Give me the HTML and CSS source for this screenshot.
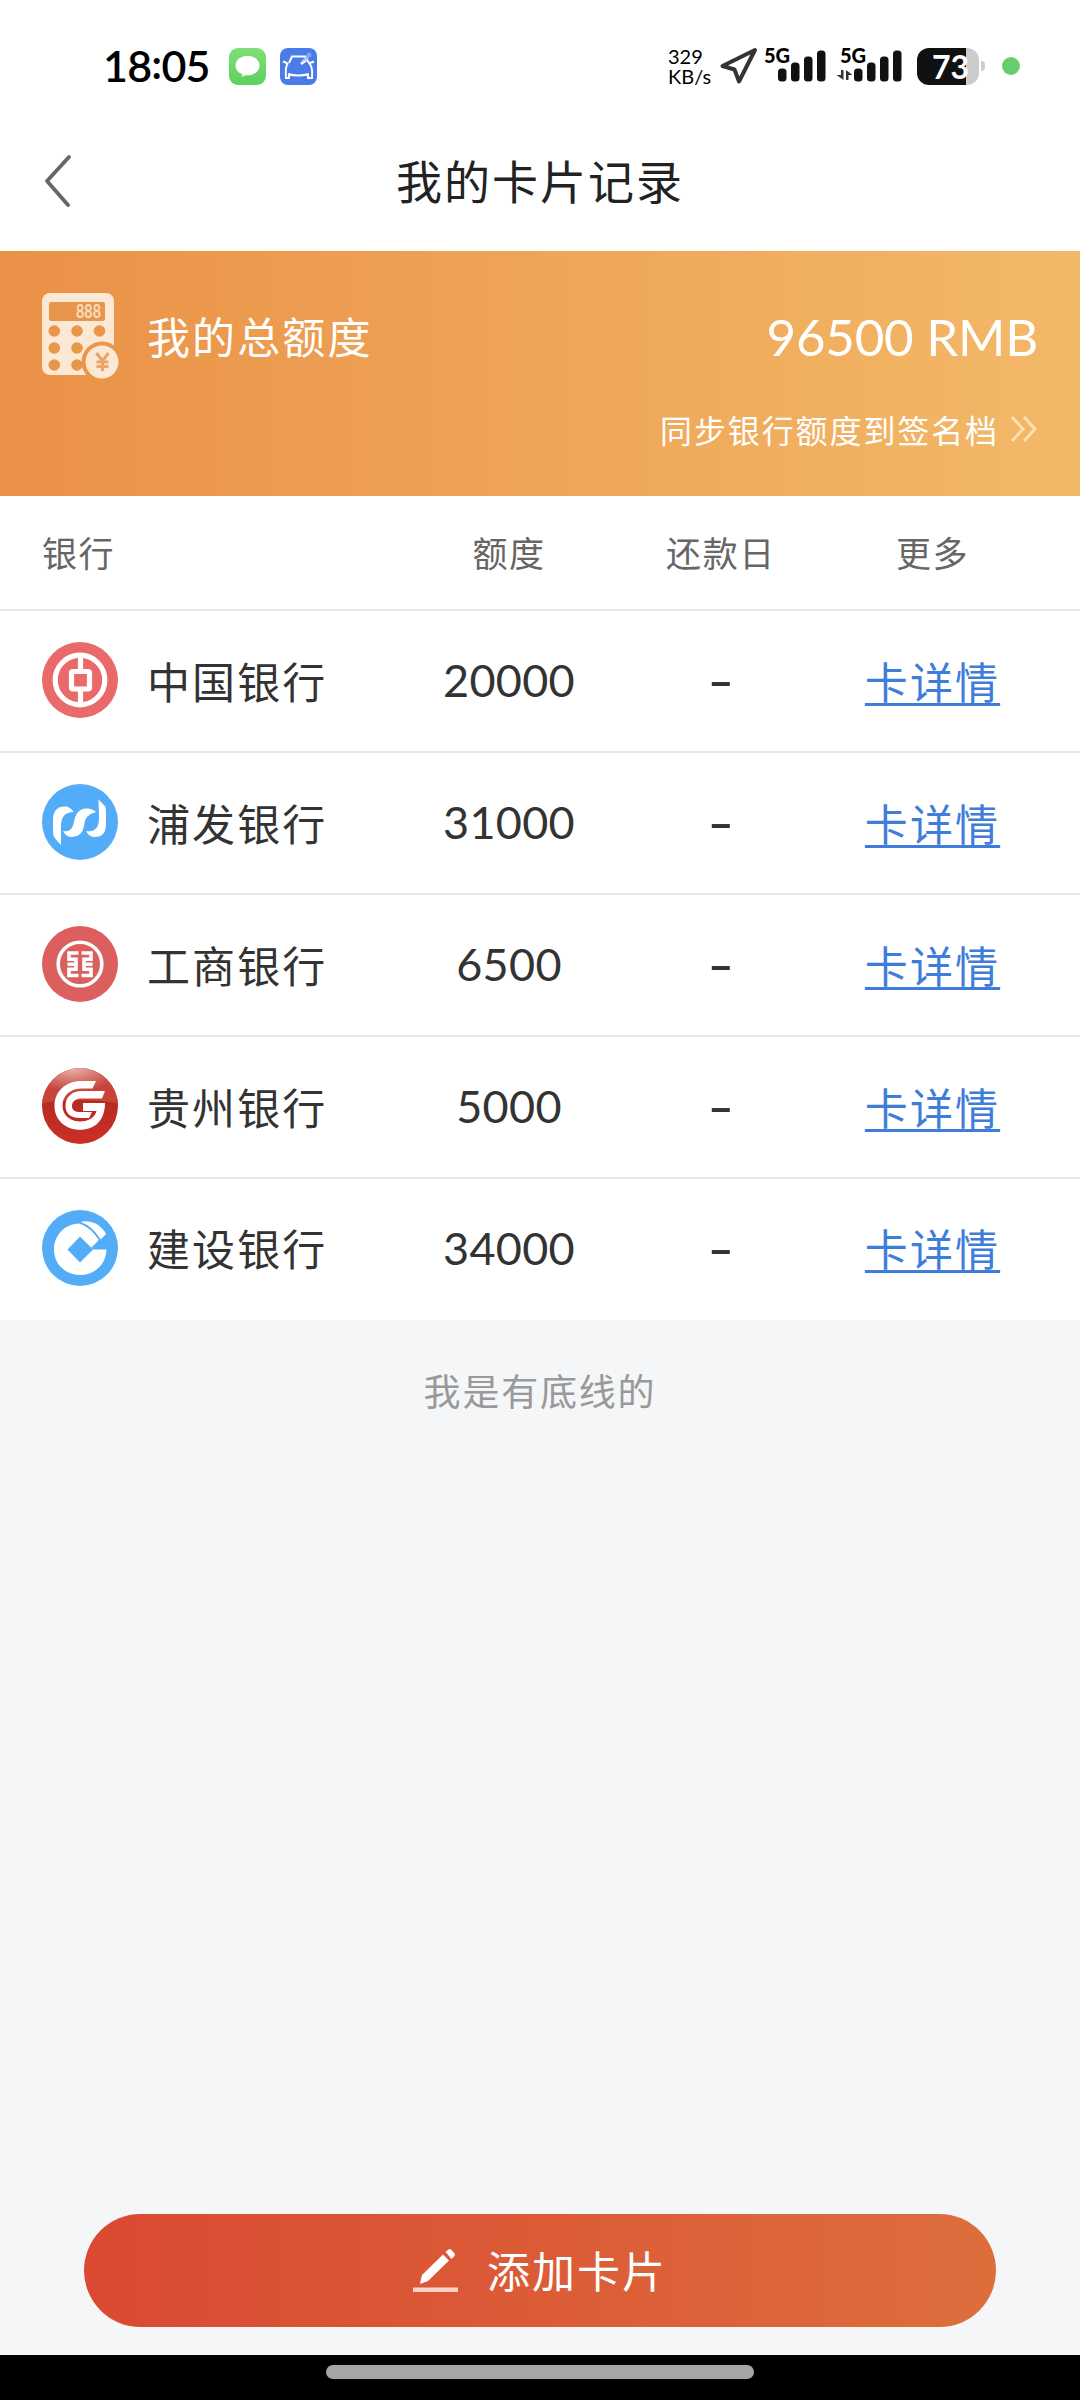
FILE: index.html
```html
<!DOCTYPE html>
<html lang="zh-CN">
<head>
  <meta charset="UTF-8">
  <meta name="viewport" content="width=device-width, initial-scale=1.0">
  <title>我的卡片记录</title>
  <link rel="stylesheet" href="styles.css">
</head>
<body>

<div class="page">
  <!-- Status bar -->
  <div class="status-bar">
    <span class="clock">18<span class="colon">:</span>05</span>
    <svg class="app-icon" viewBox="0 0 37 37">
      <defs>
        <linearGradient id="msg" x1="0" y1="0" x2="0" y2="1"><stop offset="0" stop-color="#7fdf78"/><stop offset="1" stop-color="#5fd05c"/></linearGradient>
      </defs>
      <rect width="37" height="37" rx="9" fill="url(#msg)"/>
      <ellipse cx="18.500" cy="17.500" rx="12" ry="9.800" fill="#fff"/>
      <path d="M14 25q0 3-3 4q4 0 7-3z" fill="#fff"/>
    </svg>
    <svg class="app-icon car" viewBox="0 0 37 37">
      <rect width="37" height="37" rx="8" fill="#4a7be6"/>
      <path d="M9 15L12 8.500H25L29 15M8 15Q5 18 6 30H9V26M29 15Q33 18 32 30H28V26M8 26Q18 29 29 26M3 13.500L7 15M34 13.500L30 15" fill="none" stroke="#fff" stroke-width="2"/>
      <path d="M21 16L29 7" stroke="#a9c3fa" stroke-width="3"/>
      <circle cx="29" cy="7" r="2.500" fill="#7fa5f5"/>
      <path d="M21 16l5-3" stroke="#fff" stroke-width="2"/>
    </svg>
    <div class="status-right">
      <div class="speed"><div>329</div><div>KB/s</div></div>
      <svg class="locate" viewBox="0 0 38 38"><path d="M35 3L2.500 19L14.500 22.500L19 34.500Z" fill="none" stroke="#333" stroke-width="4" stroke-linejoin="round"/></svg>
      <div class="signal">
        <span class="net">5G</span>
        <svg viewBox="0 0 64 38"><g fill="#111"><rect x="14" y="21.500" width="8.500" height="13" rx="3.500"/><rect x="27" y="15.500" width="8.500" height="19" rx="3.500"/><rect x="40" y="9.500" width="8.500" height="25" rx="3.500"/><rect x="53" y="3.500" width="8.500" height="31" rx="3.500"/></g></svg>
      </div>
      <div class="signal second">
        <span class="net">5G</span>
        <svg viewBox="0 0 64 38"><g fill="#111"><rect x="14" y="21.500" width="8.500" height="13" rx="3.500"/><rect x="27" y="15.500" width="8.500" height="19" rx="3.500"/><rect x="40" y="9.500" width="8.500" height="25" rx="3.500"/><rect x="53" y="3.500" width="8.500" height="31" rx="3.500"/></g><path d="M1 23H3.500V33L-3.500 28H1ZM6 33V23L12.500 28H8.500V33Z" fill="#333"/></svg>
      </div>
      <div class="battery"><span>73</span></div>
      <i class="dot"></i>
    </div>
  </div>

  <!-- Title bar -->
  <div class="nav-bar">
    <svg class="back" viewBox="0 0 30 54"><path d="M26 3L4 27L25 51" fill="none" stroke="#666" stroke-width="3.800" stroke-linecap="round" stroke-linejoin="round"/></svg>
    <h1>我的卡片记录</h1>
  </div>

  <!-- Total limit -->
  <div class="total">
    <div class="total-row">
      <svg class="calc" viewBox="0 0 77 86">
        <rect width="72" height="82" rx="8" fill="#fbe8d5"/>
        <rect x="7" y="9" width="56" height="19" rx="2" fill="#e9964b"/>
        <text x="34" y="25" class="calc-digits" textLength="25" lengthAdjust="spacingAndGlyphs">888</text>
        <g fill="#e9964b">
          <circle cx="12.300" cy="38" r="5.800"/><circle cx="35" cy="38" r="5.800"/><circle cx="57.500" cy="38" r="5.800"/>
          <circle cx="12.300" cy="55" r="5.800"/><circle cx="35" cy="55" r="5.800"/>
          <circle cx="12.300" cy="72" r="5.800"/><circle cx="35" cy="72" r="5.800"/>
          <circle cx="60" cy="69" r="20.500"/>
        </g>
        <circle cx="60" cy="69" r="16.500" fill="#fbe8d5"/>
        <path d="M54.500 60L60.500 68L66.500 60M60.500 68V78M54.500 69H66.500M54.500 73.500H66.500" fill="none" stroke="#e9a468" stroke-width="3"/>
      </svg>
      <span class="total-label">我的总额度</span>
      <span class="total-value">96500 RMB</span>
    </div>
    <div class="sync">
      <span>同步银行额度到签名档</span>
      <svg viewBox="0 0 28 28"><path d="M2 2L13 14L2 26M14 2L25 14L14 26" fill="none" stroke="#fde0b0" stroke-width="3"/></svg>
    </div>
  </div>

  <!-- Card list -->
  <div class="list">
    <div class="row head">
      <span>银行</span><span>额度</span><span>还款日</span><span>更多</span>
    </div>
    <div class="row">
      <div class="bank">
        <svg viewBox="0 0 76 76">
          <circle cx="38" cy="38" r="38" fill="#ea6a69"/>
          <g fill="none" stroke="#fff" stroke-width="5.200">
            <circle cx="38" cy="38" r="24.800"/>
            <path d="M38.500 13V28M38.500 49V63"/>
            <rect x="29.500" y="29.500" width="18" height="17.500" rx="1.500"/>
          </g>
        </svg>
        <span>中国银行</span>
      </div>
      <span class="amount">20000</span><span class="day">-</span><a class="more" href="#">卡详情</a>
    </div>
    <div class="row">
      <div class="bank">
        <svg viewBox="0 0 76 76">
          <circle cx="38" cy="38" r="38" fill="#52acf8"/>
          <g fill="#fff">
            <path d="M19 61L13.500 55Q11 52 11 48V36Q11 23 22 22.500Q28 22 31.500 28Q19 28 19 42Z"/>
            <path d="M21 47Q30 49 32 38Q34 25 44 24.500Q50 24 54 28Q43 30 42 42Q40 53 30 53Q24 53 21 47Z"/>
            <path d="M56.500 15.500L63 22Q64 24 64 30V40Q64 53 53 53Q47 53 44 47Q57 49 57 34Z"/>
          </g>
        </svg>
        <span>浦发银行</span>
      </div>
      <span class="amount">31000</span><span class="day">-</span><a class="more" href="#">卡详情</a>
    </div>
    <div class="row">
      <div class="bank">
        <svg viewBox="0 0 76 76">
          <circle cx="38" cy="38" r="38" fill="#dc5f5f"/>
          <g fill="none" stroke="#fff" stroke-width="3.600">
            <circle cx="38" cy="38" r="21.800"/>
            <path d="M36.500 27H27V33.200H34V43.200H27V49.500H36.500M25.500 38.200H34"/>
            <path d="M39.500 27H49V33.200H42V43.200H49V49.500H39.500M50.500 38.200H42"/>
          </g>
        </svg>
        <span>工商银行</span>
      </div>
      <span class="amount">6500</span><span class="day">-</span><a class="more" href="#">卡详情</a>
    </div>
    <div class="row">
      <div class="bank">
        <svg viewBox="0 0 76 76">
          <defs>
            <radialGradient id="gloss" cx="0.400" cy="0" r="0.650"><stop offset="0" stop-color="#e7b3ad"/><stop offset="1" stop-color="#c8443a"/></radialGradient>
            <linearGradient id="base" x1="0" y1="0" x2="0" y2="1"><stop offset="0.400" stop-color="#b52a20"/><stop offset="1" stop-color="#cc3026"/></linearGradient>
            <clipPath id="ball"><circle cx="38" cy="38" r="38"/></clipPath>
          </defs>
          <circle cx="38" cy="38" r="38" fill="url(#base)"/>
          <path d="M0 0H76V35Q38 29 0 35Z" fill="url(#gloss)" clip-path="url(#ball)"/>
          <path d="M54 13L50.500 20.500H40C28 20.500 20 28 20.500 38.500C21 48 29 53.500 38 53.500C47 53.500 53 49 54.500 43H41V35H63C63 52 53 61.800 38 61.800C23 61.800 12.500 51.500 12.500 38C12.500 24 23 13.500 38 13Z" fill="#fff"/>
          <path d="M63 23L60 30.500H40C34 30.500 30 33 30 38C30 42 33 44 38 44H50L47 50H38C29 50 23.500 46 23.500 38C23.500 29 30 23 40 23Z" fill="#fff"/>
        </svg>
        <span>贵州银行</span>
      </div>
      <span class="amount">5000</span><span class="day">-</span><a class="more" href="#">卡详情</a>
    </div>
    <div class="row">
      <div class="bank">
        <svg viewBox="0 0 76 76">
          <circle cx="38" cy="38" r="38" fill="#52acf8"/>
          <path d="M37 13.500C46 16 52 23 57 30L50 39.500H64.500C64 54 53 65 38.500 65C23 65 12 54 12 39.500C12 25 23 14 37 13.500Z" fill="#fff"/>
          <path d="M38 12C48 9 60 15 64 24L58.500 29.500Q50 16 38 12Z" fill="#fff"/>
          <path d="M38 26.500L51 39.500L38 52.500L25.500 39.500Z" fill="#52acf8"/>
          <path d="M38 12.500Q50 17 58 30L49 39" fill="none" stroke="#52acf8" stroke-width="1.500"/>
        </svg>
        <span>建设银行</span>
      </div>
      <span class="amount">34000</span><span class="day">-</span><a class="more" href="#">卡详情</a>
    </div>
  </div>
  <p class="end-line">我是有底线的</p>

  <!-- Add button -->
  <div class="add-wrap">
    <button class="add">
      <svg viewBox="0 0 46 46">
        <path d="M7 36L9 27L30 6.500L36 12.500L15 33Z" fill="#fff"/>
        <path d="M32.500 4L35.500 1.500Q37 0.500 38.500 2L41.500 5.500Q42.500 7 41 8.500L38.500 11Z" fill="#fff"/>
        <rect y="39.500" width="45" height="4.500" fill="#fcd3c8"/>
      </svg>
      <span>添加卡片</span>
    </button>
  </div>
  <div class="home-bar"><i></i></div>
</div>

</body>
</html>
```
FILE: styles.css
```css
* {
  box-sizing: border-box;
}
body {
  margin: 0;
  background-color: #f4f6f8;
  color: #333;
  font-family: Lato, "Noto Sans CJK SC", sans-serif;
}
.page {
  width: 1080px;
  height: 2400px;
  display: flex;
  flex-direction: column;
}
svg {
  display: block;
  flex-shrink: 0;
  overflow: visible;
}

/* status bar */
.status-bar {
  height: 116px;
  padding: 16px 60px 0 103px;
  display: flex;
  align-items: center;
  background-color: #fff;
  color: #000;
}
.clock {
  width: 126px;
  font-size: 43px;
  line-height: 50px;
  font-weight: 600;
  letter-spacing: -0.8px;
}
.colon {
  position: relative;
  top: -3px;
}
.app-icon {
  width: 37px;
  height: 37px;
}
.car {
  margin-left: 14px;
}
.status-right {
  margin-left: auto;
  display: flex;
  align-items: center;
}
.speed {
  width: 52px;
  font-size: 20px;
  line-height: 20px;
}
.speed div {
  height: 20px;
}
.locate {
  width: 38px;
  height: 38px;
}
.signal {
  position: relative;
  width: 64px;
  margin-left: 6px;
}
.signal svg {
  width: 64px;
  height: 38px;
}
.second {
  margin-left: 12px;
}
.net {
  position: absolute;
  left: 0;
  top: -2px;
  font-size: 20px;
  line-height: 20px;
  font-weight: 900;
}
.battery {
  position: relative;
  width: 62px;
  height: 37px;
  margin-left: 13px;
  border-radius: 12px;
  background: linear-gradient(to right, #111 49px, #ccc 49px);
  color: #fff;
  font-size: 32px;
  line-height: 37px;
  font-weight: bold;
  text-align: right;
  padding-right: 10px;
}
.battery::after {
  content: "";
  position: absolute;
  right: -6px;
  top: 13px;
  width: 4px;
  height: 10px;
  border-radius: 0 4px 4px 0;
  background-color: #ccc;
}
.dot {
  width: 18px;
  height: 18px;
  margin-left: 23px;
  border-radius: 50%;
  background-color: #68ce6d;
}

/* title bar */
.nav-bar {
  position: relative;
  height: 135px;
  display: flex;
  align-items: center;
  justify-content: center;
  padding-bottom: 9px;
  background-color: #fff;
}
.back {
  position: absolute;
  left: 43px;
  top: 38px;
  width: 30px;
  height: 54px;
}
h1 {
  margin: 0;
  color: #222;
  font-size: 46px;
  font-weight: normal;
  letter-spacing: 2px;
}

/* total limit */
.total {
  height: 245px;
  padding: 42px 42px 0;
  background: linear-gradient(to right, #ea9147, #f3b968);
  color: #fff;
}
.total-row {
  height: 86px;
  display: flex;
  align-items: center;
}
.calc {
  width: 77px;
  height: 86px;
}
.calc-digits {
  fill: #f8dcc0;
  font-size: 18px;
  font-weight: bold;
}
.total-label {
  margin-left: 28px;
  padding-bottom: 3px;
  font-size: 43px;
  letter-spacing: 2.1px;
}
.total-value {
  margin-left: auto;
  font-size: 51px;
  letter-spacing: -0.2px;
}
.sync {
  display: flex;
  align-items: center;
  justify-content: flex-end;
  margin-top: 27px;
  font-size: 32px;
  letter-spacing: 1.9px;
}
.sync svg {
  width: 28px;
  height: 28px;
  margin-left: 11px;
}

/* card list */
.list {
  background-color: #fff;
}
.row {
  height: 142px;
  padding: 0 42px 2px;
  display: grid;
  grid-template-columns: 361px 212px 212px 211px;
  align-items: center;
  justify-items: center;
  border-bottom: 2px solid #e6e7e8;
  font-size: 43px;
  letter-spacing: 2.1px;
}
.row:last-child {
  height: 141px;
  border-bottom-color: #fff;
}
.row > :first-child {
  justify-self: start;
}
.head {
  height: 115px;
  padding-bottom: 3px;
  color: #666;
  font-size: 35px;
  letter-spacing: 1.6px;
}
.bank {
  display: flex;
  align-items: center;
}
.bank svg {
  width: 76px;
  height: 76px;
  margin-right: 29px;
}
.bank span {
  padding-bottom: 1px;
}
.amount {
  font-size: 45px;
  letter-spacing: 0.3px;
}
.day {
  font-size: 52px;
  letter-spacing: 0;
  transform: scaleX(1.4);
}
.more {
  padding-bottom: 1px;
  color: #3f7ddb;
  text-decoration: underline;
  text-decoration-thickness: 3px;
  text-decoration-skip-ink: none;
  text-underline-offset: 4px;
}
.end-line {
  margin: 43px 0 0;
  text-align: center;
  color: #999;
  font-size: 37px;
  letter-spacing: 1.8px;
}

/* bottom */
.add-wrap {
  margin-top: auto;
  padding: 0 84px 28px;
}
.add {
  width: 912px;
  height: 113px;
  display: flex;
  align-items: center;
  justify-content: center;
  border: none;
  border-radius: 57px;
  background: linear-gradient(to right, #da4932, #dd6e3c);
  color: #fff;
  font-family: inherit;
  font-size: 43px;
  letter-spacing: 2px;
}
.add svg {
  width: 46px;
  height: 46px;
  margin-right: 28px;
}
.add span {
  padding-bottom: 4px;
}
.home-bar {
  height: 45px;
  padding-top: 10px;
  background-color: #000;
}
.home-bar i {
  display: block;
  width: 428px;
  height: 14px;
  margin: 0 auto;
  border-radius: 7px;
  background-color: #a5a5a5;
}
```
